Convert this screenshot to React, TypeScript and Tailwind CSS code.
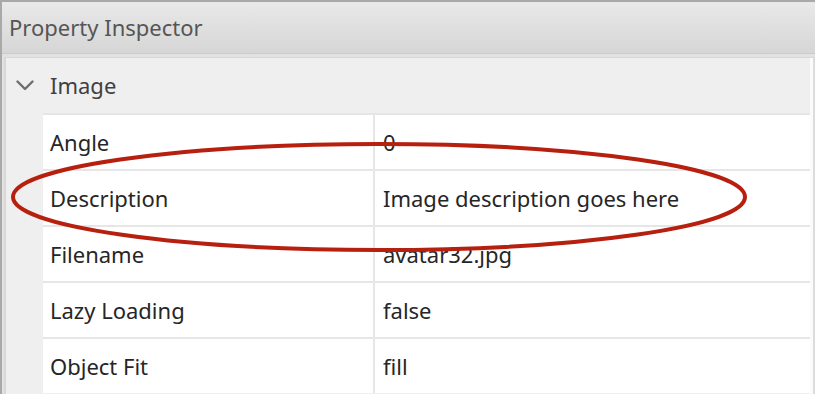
import React from 'react';

interface Property {
  name: string;
  value: string;
}

const properties: Property[] = [
  { name: 'Angle', value: '0' },
  { name: 'Description', value: 'Image description goes here' },
  { name: 'Filename', value: 'avatar32.jpg' },
  { name: 'Lazy Loading', value: 'false' },
  { name: 'Object Fit', value: 'fill' },
];

function PropertyRow({ name, value }: Property) {
  return (
    <div className="flex h-[56px] shrink-0 border-t-2 border-[#e6e6e6] bg-white">
      <div className="flex w-[332px] items-center border-r-2 border-[#e6e6e6] pl-[7px] text-[#262626]">
        {name}
      </div>
      <div className="flex flex-1 items-center pl-[8px] text-[#262626]">{value}</div>
    </div>
  );
}

export default function App() {
  return (
    <div
      className="relative flex h-[394px] w-[815px] flex-col overflow-hidden border-l-2 border-t-2 border-[#a9a9a9] bg-[#e2e2e2] text-[22px]"
      style={{ fontFamily: '"Noto Sans", sans-serif' }}
    >
      {/* panel title */}
      <div className="flex h-[52px] shrink-0 items-center border-b border-[#cbcbcb] bg-gradient-to-b from-[#e9e9e9] to-[#d6d6d6] pl-[7px] text-[#555555]">
        Property Inspector
      </div>

      <div className="flex flex-1 pl-[2px] pt-[3px]">
        <div className="flex flex-1 border-l-2 border-t border-[#d8d8d8] bg-[#fbfbfb]">
          <div className="flex w-[804px] flex-col bg-[#efefef]">
            {/* group header */}
            <div className="flex h-[55px] shrink-0 items-center">
              <svg width="18" height="11" viewBox="0 0 18 11" className="ml-[10px]">
                <path d="M1.5 1.5 L9 9 L16.5 1.5" fill="none" stroke="#6e6e6e" strokeWidth="2.4" strokeLinecap="round" strokeLinejoin="round" />
              </svg>
              <span className="ml-[16px] text-[#404040]">Image</span>
            </div>
            <div className="flex flex-col pl-[37px]">
              {properties.map((p) => (
                <PropertyRow key={p.name} name={p.name} value={p.value} />
              ))}
            </div>
          </div>
          <div className="ml-auto w-[2px] bg-[#dcdcdc]" />
        </div>
      </div>

      {/* annotation */}
      <svg className="pointer-events-none absolute left-[-2px] top-[-2px]" width="815" height="394" viewBox="0 0 815 394">
        <ellipse cx="379" cy="197" rx="366" ry="53" fill="none" stroke="#b71f0e" strokeWidth="4" />
      </svg>
    </div>
  );
}
